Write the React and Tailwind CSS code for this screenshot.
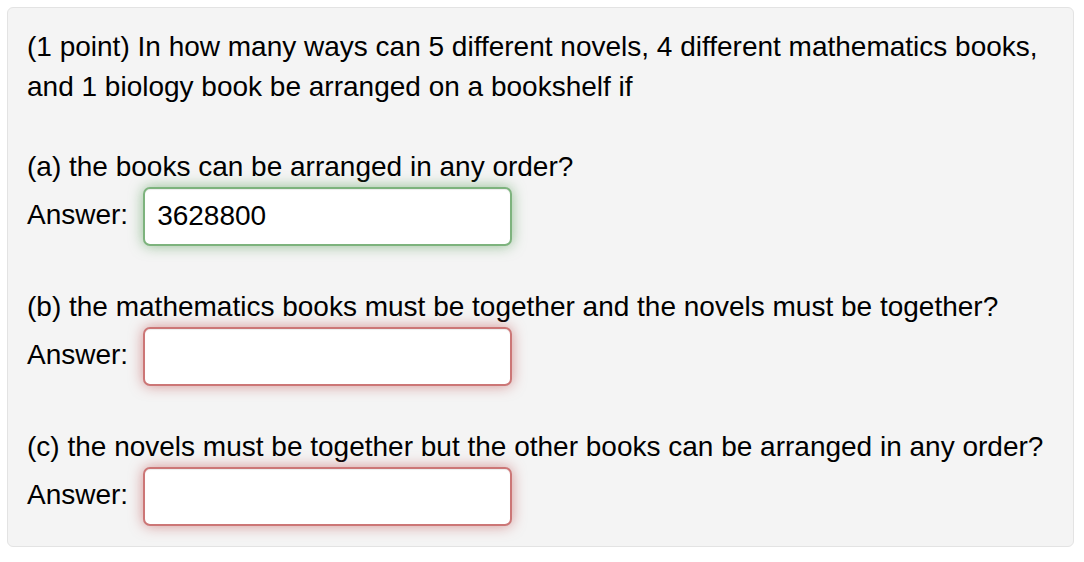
import React from "react";

function AnswerRow({ value, status }) {
  const cls =
    status === "correct"
      ? "border-[rgba(81,153,81,0.75)] shadow-[inset_0_1px_1px_rgba(0,0,0,0.075),0_0_14px_rgba(81,153,81,0.6)]"
      : "border-[rgba(191,84,84,0.8)] shadow-[inset_0_1px_1px_rgba(0,0,0,0.075),0_0_14px_rgba(191,84,84,0.6)]";
  return (
    <div className="flex h-[60px] items-start">
      <span className="leading-[56px]">Answer:</span>
      <input
        readOnly
        value={value}
        className={`ml-[15px] h-[59px] w-[369px] rounded-[7px] border-2 bg-white pb-[2px] pl-[12px] text-[28px] text-black outline-none ${cls}`}
        style={{ fontFamily: '"Liberation Sans", Arial, sans-serif' }}
      />
    </div>
  );
}

export default function App() {
  return (
    <div
      className="min-h-[562px] bg-white pt-[7px] pl-[7px] text-black"
      style={{ fontFamily: '"Liberation Sans", Arial, sans-serif' }}
    >
      <div className="w-[1067px] rounded-[6px] border border-[#e3e3e3] bg-[#f4f4f4] px-[19px] py-[19px] text-[28px] leading-[40px]">
        <p>
          (1 point) In how many ways can 5 different novels, 4 different mathematics books, and 1 biology book be
          arranged on a bookshelf if
        </p>
        <div className="mt-[40px]">
          <p>(a) the books can be arranged in any order?</p>
          <AnswerRow value="3628800" status="correct" />
        </div>
        <div className="mt-[40px]">
          <p>(b) the mathematics books must be together and the novels must be together?</p>
          <AnswerRow value="" status="incorrect" />
        </div>
        <div className="mt-[40px]">
          <p>(c) the novels must be together but the other books can be arranged in any order?</p>
          <AnswerRow value="" status="incorrect" />
        </div>
      </div>
    </div>
  );
}
